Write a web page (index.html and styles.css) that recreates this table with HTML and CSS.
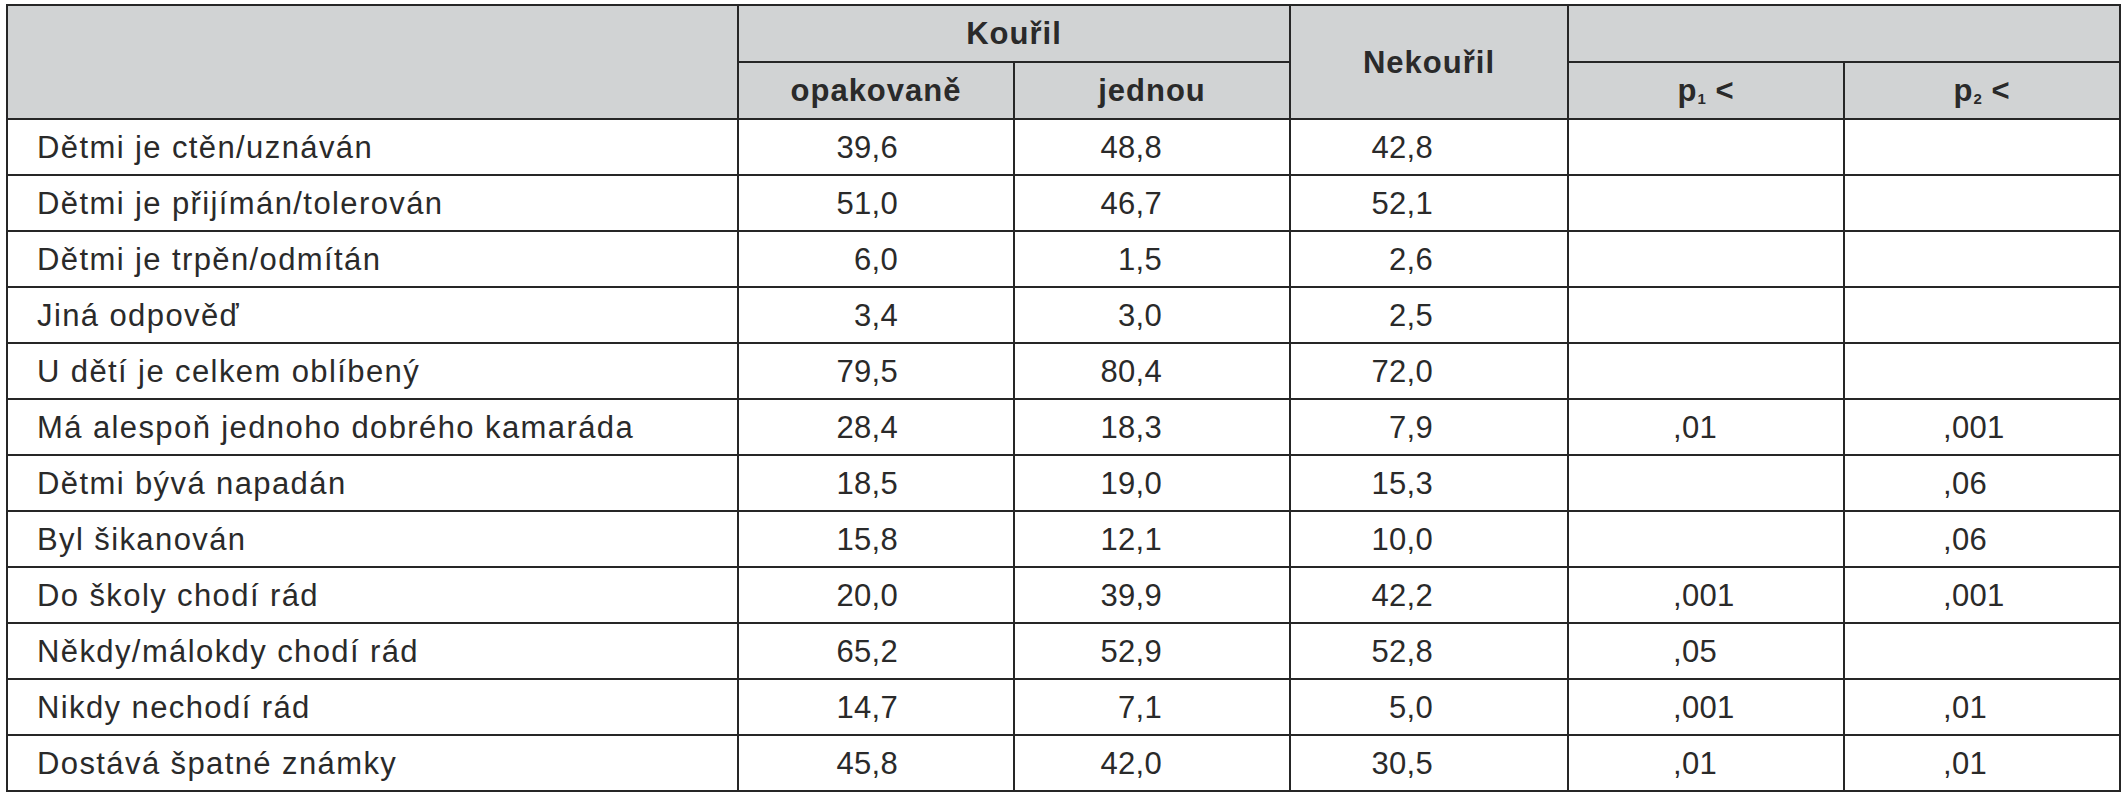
FILE: index.html
```html
<!DOCTYPE html>
<html lang="cs">
<head>
<meta charset="utf-8">
<title>Tabulka</title>
<link rel="stylesheet" href="styles.css">
</head>
<body>
<table class="data">
  <colgroup>
    <col class="c-label">
    <col class="c-num">
    <col class="c-num">
    <col class="c-num3">
    <col class="c-p">
    <col class="c-p">
  </colgroup>
  <thead>
    <tr class="h1">
      <th class="blank" rowspan="2"></th>
      <th colspan="2">Kouřil</th>
      <th rowspan="2">Nekouřil</th>
      <th colspan="2"></th>
    </tr>
    <tr class="h2">
      <th>opakovaně</th>
      <th>jednou</th>
      <th>p<sub>1</sub> &lt;</th>
      <th>p<sub>2</sub> &lt;</th>
    </tr>
  </thead>
  <tbody>
    <tr><td class="lab">Dětmi je ctěn/uznáván</td><td class="n1">39,6</td><td class="n2">48,8</td><td class="n3">42,8</td><td class="p1"></td><td class="p2"></td></tr>
    <tr><td class="lab">Dětmi je přijímán/tolerován</td><td class="n1">51,0</td><td class="n2">46,7</td><td class="n3">52,1</td><td class="p1"></td><td class="p2"></td></tr>
    <tr><td class="lab">Dětmi je trpěn/odmítán</td><td class="n1">6,0</td><td class="n2">1,5</td><td class="n3">2,6</td><td class="p1"></td><td class="p2"></td></tr>
    <tr><td class="lab">Jiná odpověď</td><td class="n1">3,4</td><td class="n2">3,0</td><td class="n3">2,5</td><td class="p1"></td><td class="p2"></td></tr>
    <tr><td class="lab">U dětí je celkem oblíbený</td><td class="n1">79,5</td><td class="n2">80,4</td><td class="n3">72,0</td><td class="p1"></td><td class="p2"></td></tr>
    <tr><td class="lab">Má alespoň jednoho dobrého kamaráda</td><td class="n1">28,4</td><td class="n2">18,3</td><td class="n3">7,9</td><td class="p1">,01</td><td class="p2">,001</td></tr>
    <tr><td class="lab">Dětmi bývá napadán</td><td class="n1">18,5</td><td class="n2">19,0</td><td class="n3">15,3</td><td class="p1"></td><td class="p2">,06</td></tr>
    <tr><td class="lab">Byl šikanován</td><td class="n1">15,8</td><td class="n2">12,1</td><td class="n3">10,0</td><td class="p1"></td><td class="p2">,06</td></tr>
    <tr><td class="lab">Do školy chodí rád</td><td class="n1">20,0</td><td class="n2">39,9</td><td class="n3">42,2</td><td class="p1">,001</td><td class="p2">,001</td></tr>
    <tr><td class="lab">Někdy/málokdy chodí rád</td><td class="n1">65,2</td><td class="n2">52,9</td><td class="n3">52,8</td><td class="p1">,05</td><td class="p2"></td></tr>
    <tr><td class="lab">Nikdy nechodí rád</td><td class="n1">14,7</td><td class="n2">7,1</td><td class="n3">5,0</td><td class="p1">,001</td><td class="p2">,01</td></tr>
    <tr><td class="lab">Dostává špatné známky</td><td class="n1">45,8</td><td class="n2">42,0</td><td class="n3">30,5</td><td class="p1">,01</td><td class="p2">,01</td></tr>
  </tbody>
</table>
</body>
</html>
```
FILE: styles.css
```css
html, body {
  margin: 0;
  padding: 0;
  background: #ffffff;
}

body {
  padding: 4px 0 0 6px;
  font-family: "Liberation Sans", Arial, sans-serif;
  color: #2a2a2a;
}

.data {
  border-collapse: collapse;
  table-layout: fixed;
  width: 2114px;
  font-size: 31px;
}

.c-label { width: 731px; }
.c-num { width: 276px; }
.c-num3 { width: 278px; }
.c-p { width: 276px; }

.data th,
.data td {
  border: 2px solid #262626;
  padding: 0;
  line-height: 1;
}

.data thead th {
  background: #d1d3d4;
  font-weight: bold;
  text-align: center;
  color: #2a2a2a;
  letter-spacing: 1px;
}

.data .h1 th { height: 55px; }
.data .h2 th { height: 55px; }

.data th sub {
  font-size: 15px;
  vertical-align: -3px;
  letter-spacing: 0;
}

.data tbody td { height: 54px; }

.lab {
  text-align: left;
  padding-left: 29px !important;
  letter-spacing: 1.4px;
}

.n1, .n2, .n3, .p1, .p2 { letter-spacing: 0.3px; }

.n1 { text-align: right; padding-right: 115px !important; }
.n2 { text-align: right; padding-right: 127px !important; }
.n3 { text-align: right; padding-right: 134px !important; }
.p1 { text-align: left; padding-left: 104px !important; }
.p2 { text-align: left; padding-left: 98px !important; }
```
